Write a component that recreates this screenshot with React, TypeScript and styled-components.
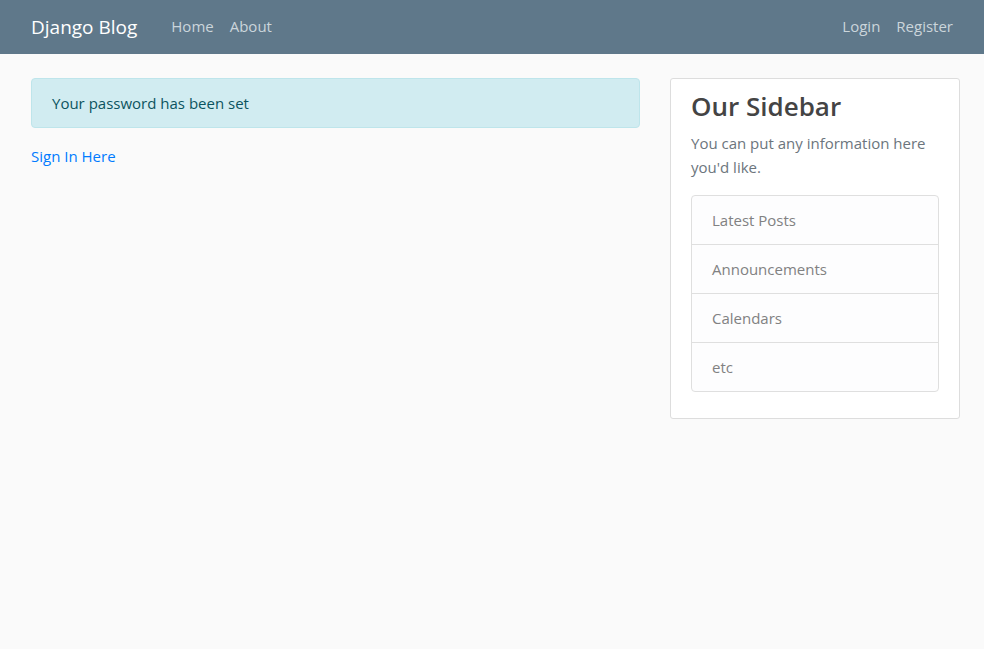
import React from "react";
import styled, { createGlobalStyle } from "styled-components";

const GlobalStyle = createGlobalStyle`
  *, *::before, *::after { box-sizing: border-box; }
  body {
    margin: 0;
    background: #fafafa;
    color: #333333;
    font-family: "Segoe UI", "Open Sans", "Noto Sans", sans-serif;
    font-size: 15px;
    line-height: 24px;
  }
`;

const Header = styled.header`
  background: #5f788a;
`;

const Navbar = styled.nav`
  display: flex;
  align-items: center;
  justify-content: space-between;
  min-height: 54px;
  padding: 0 23px 0 31px;
`;

const NavGroup = styled.div`
  display: flex;
  align-items: center;
`;

const Brand = styled.a`
  margin-right: 26px;
  color: #ffffff;
  font-size: 19px;
  line-height: 30px;
  text-decoration: none;
`;

const NavLink = styled.a`
  padding: 7px 8px 9px;
  color: #cbd5db;
  text-decoration: none;

  &:hover { color: #ffffff; }
`;

const Layout = styled.main`
  display: grid;
  grid-template-columns: minmax(0, 1fr) 290px;
  align-items: start;
  gap: 30px;
  padding: 24px 24px 24px 31px;
`;

const Alert = styled.div`
  margin-bottom: 16px;
  padding: 12px 20px;
  border: 1px solid #bee5eb;
  border-radius: 4px;
  background: #d1ecf1;
  color: #0c5460;
`;

const TextLink = styled.a`
  color: #007bff;
  text-decoration: none;

  &:hover { text-decoration: underline; }
`;

const Sidebar = styled.aside`
  padding: 10px 20px 26px;
  border: 1px solid #dddddd;
  border-radius: 3px;
  background: #ffffff;
`;

const SidebarTitle = styled.h3`
  margin: 0 0 8px;
  color: #444444;
  font-size: 26px;
  font-weight: 600;
  line-height: 34px;
`;

const SidebarText = styled.p`
  margin: 0 0 16px;
  color: #6c757d;
`;

const List = styled.ul`
  margin: 0;
  padding: 0;
  border: 1px solid #dfdfdf;
  border-radius: 4px;
  background: #fdfdfe;
  list-style: none;
`;

const ListItem = styled.li`
  padding: 12px 20px;
  color: #818182;

  & + & { border-top: 1px solid #dfdfdf; }
`;

const items = ["Latest Posts", "Announcements", "Calendars", "etc"];

export default function App() {
  return (
    <>
      <GlobalStyle />
      <Header>
        <Navbar>
          <NavGroup>
            <Brand href="#">Django Blog</Brand>
            <NavLink href="#">Home</NavLink>
            <NavLink href="#">About</NavLink>
          </NavGroup>
          <NavGroup>
            <NavLink href="#">Login</NavLink>
            <NavLink href="#">Register</NavLink>
          </NavGroup>
        </Navbar>
      </Header>
      <Layout>
        <section>
          <Alert role="status">Your password has been set</Alert>
          <TextLink href="#">Sign In Here</TextLink>
        </section>
        <Sidebar>
          <SidebarTitle>Our Sidebar</SidebarTitle>
          <SidebarText>You can put any information here you'd like.</SidebarText>
          <List>
            {items.map((item) => (
              <ListItem key={item}>{item}</ListItem>
            ))}
          </List>
        </Sidebar>
      </Layout>
    </>
  );
}
